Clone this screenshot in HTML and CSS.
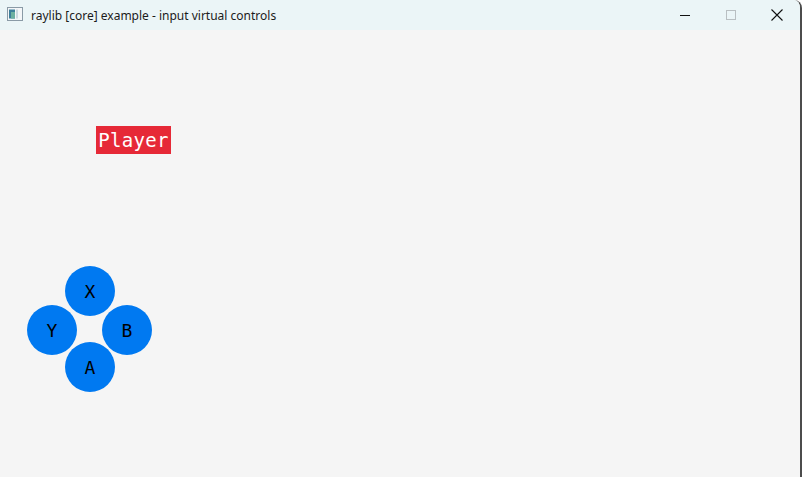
FILE: index.html
```html
<!doctype html>
<html lang="en">
  <head>
    <meta charset="utf-8" />
    <meta name="viewport" content="width=device-width, initial-scale=1" />
    <title>raylib [core] example - input virtual controls</title>
    <link rel="stylesheet" href="styles.css">
  </head>
  <body>
    <div class="window">
      <div class="titlebar">
        <div class="title">
          <svg class="app-icon" width="16" height="14" viewBox="0 0 16 14">
            <rect x="0.5" y="0.5" width="15" height="13" fill="#f4f6f8" stroke="#8a9aa6" />
            <rect x="2" y="2.5" width="6" height="9" fill="#3d7f9a" />
            <rect x="4" y="5" width="4" height="6.5" fill="#6db0a0" />
            <rect x="9" y="2.5" width="2" height="9" fill="#cdd9e0" />
          </svg>
          <span>raylib [core] example - input virtual controls</span>
        </div>
        <div class="caption-buttons">
          <button class="caption">
            <svg width="10" height="10" viewBox="0 0 10 10">
              <path d="M0 5.5h10" stroke="#111" stroke-width="1" />
            </svg>
          </button>
          <button class="caption disabled">
            <svg width="10" height="10" viewBox="0 0 10 10">
              <rect x="0.5" y="0.5" width="9" height="9" fill="none" stroke="#b9bfc2" />
            </svg>
          </button>
          <button class="caption">
            <svg width="12" height="12" viewBox="0 0 12 12">
              <path d="M0.5 0.5l11 11M11.5 0.5l-11 11" stroke="#111" stroke-width="1.1" />
            </svg>
          </button>
        </div>
      </div>

      <div class="game">
        <div class="player">Player</div>

        <div class="pad-button btn-x">X</div>
        <div class="pad-button btn-y">Y</div>
        <div class="pad-button btn-b">B</div>
        <div class="pad-button btn-a">A</div>
      </div>
    </div>
  </body>
</html>
```

FILE: styles.css
```css
:root {
  --titlebar-bg: #ebf5f7;
  --game-bg: #f5f5f5;
  --ray-red: #e62937;
  --ray-blue: #0079f1;
  --frame-color: #4c4c4c;
}

html,
body {
  margin: 0;
  padding: 0;
  background: #ffffff;
}

body {
  width: 802px;
  height: 477px;
  overflow: hidden;
}

.window {
  width: 800px;
  height: 477px;
  display: flex;
  flex-direction: column;
  border-right: 2px solid var(--frame-color);
  border-top-right-radius: 8px;
  overflow: hidden;
  background: var(--game-bg);
}

.titlebar {
  height: 30px;
  flex: none;
  display: flex;
  align-items: center;
  justify-content: space-between;
  background: var(--titlebar-bg);
}

.title {
  display: flex;
  align-items: center;
  gap: 8px;
  padding-left: 7px;
  font-family: 'Noto Sans', 'Open Sans', sans-serif;
  font-size: 12px;
  color: #1b1b1b;
}

.app-icon {
  margin-top: -2px;
}

.caption-buttons {
  display: flex;
  height: 100%;
}

.caption {
  width: 46px;
  height: 100%;
  border: none;
  background: none;
  padding: 0;
  display: flex;
  align-items: center;
  justify-content: center;
}

.game {
  flex: 1;
  position: relative;
  font-family: 'DejaVu Sans Mono', 'Liberation Mono', monospace;
}

.player {
  position: absolute;
  left: 96px;
  top: 96px;
  width: 75px;
  height: 28px;
  background: var(--ray-red);
  color: #ffffff;
  font-size: 19px;
  line-height: 28px;
  text-align: center;
  letter-spacing: 0.3px;
}

.pad-button {
  position: absolute;
  width: 50px;
  height: 50px;
  border-radius: 50%;
  background: var(--ray-blue);
  color: #000000;
  font-size: 18px;
  line-height: 52px;
  text-align: center;
}

.btn-x {
  left: 65px;
  top: 236px;
}

.btn-y {
  left: 27px;
  top: 275px;
}

.btn-b {
  left: 102px;
  top: 275px;
}

.btn-a {
  left: 65px;
  top: 312px;
}
```
